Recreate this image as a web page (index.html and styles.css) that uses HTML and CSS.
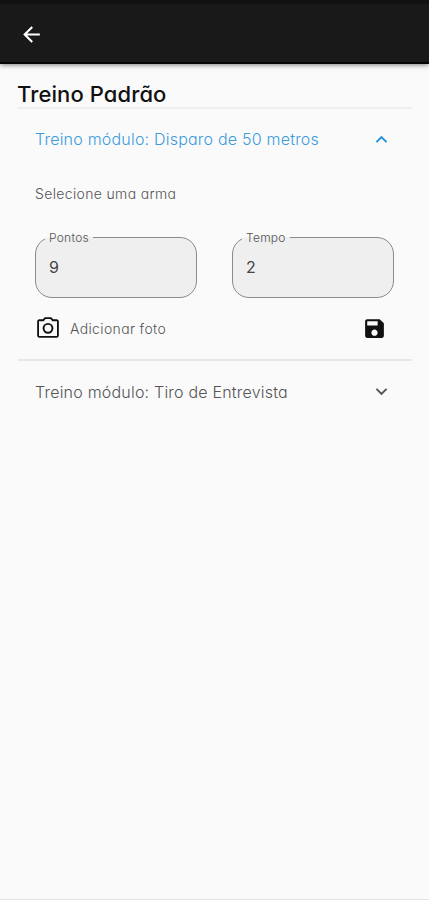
FILE: index.html
```html
<!DOCTYPE html>
<html lang="pt-BR">
<head>
<meta charset="utf-8">
<meta name="viewport" content="width=device-width, initial-scale=1">
<title>Treino Padrão</title>
<link rel="stylesheet" href="styles.css">
</head>
<body>
<header class="app-bar">
  <svg class="back" viewBox="0 0 24 24"><path d="M20 11H7.83l5.59-5.59L12 4l-8 8 8 8 1.41-1.41L7.83 13H20v-2z"/></svg>
</header>
<main class="content">
  <h1 class="title">Treino Padrão</h1>
  <section class="panel">
    <div class="panel-head active">
      <span>Treino módulo: Disparo de 50 metros</span>
      <svg class="chevron" viewBox="0 0 24 24"><path d="M12 8l-6 6 1.41 1.41L12 10.83l4.59 4.58L18 14z"/></svg>
    </div>
    <div class="panel-body">
      <p class="select">Selecione uma arma</p>
      <div class="fields">
        <fieldset class="field"><legend>Pontos</legend><div class="value">9</div></fieldset>
        <fieldset class="field"><legend>Tempo</legend><div class="value">2</div></fieldset>
      </div>
      <div class="actions">
        <svg class="icon camera" viewBox="0 0 24 24"><path d="M20 4h-3.17L15 2H9L7.17 4H4c-1.1 0-2 .9-2 2v13c0 1.1.9 2 2 2h16c1.1 0 2-.9 2-2V6c0-1.1-.9-2-2-2zm.3 15.3H3.7V5.7h4.25l1.83-2h4.44l1.83 2h4.25v13.6zM12 7.3a5 5 0 1 0 0 10 5 5 0 0 0 0-10zm0 8.2a3.2 3.2 0 1 1 0-6.4 3.2 3.2 0 0 1 0 6.4z"/></svg>
        <span class="photo">Adicionar foto</span>
        <svg class="icon save" viewBox="0 0 24 24"><path d="M17 3H5c-1.11 0-2 .9-2 2v14c0 1.1.89 2 2 2h14c1.1 0 2-.9 2-2V7l-4-4zm-5 16c-1.66 0-3-1.34-3-3s1.34-3 3-3 3 1.34 3 3-1.34 3-3 3zm3-10H5V5h10v4z"/></svg>
      </div>
    </div>
  </section>
  <section class="panel">
    <div class="panel-head">
      <span>Treino módulo: Tiro de Entrevista</span>
      <svg class="chevron" viewBox="0 0 24 24"><path d="M7.41 8.59L12 13.17l4.59-4.58L18 10l-6 6-6-6z"/></svg>
    </div>
  </section>
</main>
</body>
</html>
```
FILE: styles.css
```css
* { box-sizing: border-box; }
body {
  margin: 0;
  height: 900px;
  display: flex;
  flex-direction: column;
  background: #fafafa;
  border-bottom: 1px solid #e2e2e2;
  color: #555;
  font-family: Inter, "Liberation Sans", sans-serif;
  font-feature-settings: "cv11";
  font-weight: 300;
  white-space: nowrap;
}
.app-bar {
  height: 64px;
  padding: 4px 19px 0;
  display: flex;
  align-items: center;
  background: #191919;
  border-top: 4px solid #121212;
  border-bottom: 2px solid #050505;
  box-shadow: 0 1px 5px rgba(0, 0, 0, .5);
}
.back { width: 25px; height: 25px; margin-top: -1px; fill: #fff; }
.content { padding: 0 17px 0 18px; }
.title {
  margin: 0 0 0 -1px;
  height: 45px;
  padding-top: 17px;
  border-bottom: 2px solid #eee;
  color: #111;
  font-size: 22px;
  line-height: 27px;
  font-weight: 500;
  letter-spacing: .1px;
}
.panel { padding: 0 18px 0 17px; }
.panel + .panel { border-top: 2px solid #e8e8e8; }
.panel-head {
  height: 61px;
  padding-right: 1px;
  display: flex;
  align-items: center;
  justify-content: space-between;
  font-size: 16px;
  letter-spacing: .21px;
}
.panel-head.active { height: 60px; color: #3d9bdc; }
.chevron { width: 23px; height: 23px; fill: #555; }
.active .chevron { fill: #218fdc; }
.panel-body { height: 190px; }
.select { margin: 0; padding-top: 15px; font-size: 14px; line-height: 20px; letter-spacing: .35px; }
.fields { margin-top: 26px; display: flex; gap: 35px; }
.field {
  flex: 1;
  min-width: 0;
  height: 68px;
  margin: 0;
  padding: 0 13px;
  border: 1px solid #8b8b8b;
  border-radius: 17px;
  background: #efefef;
}
.field legend { margin-left: -4px; padding: 0 4px; font-size: 12px; line-height: 15px; letter-spacing: .25px; }
.value { margin-top: 12px; font-size: 16px; line-height: 20px; color: #444; font-weight: 400; }
.actions { display: flex; align-items: center; height: 24px; margin-top: 18px; font-size: 14px; letter-spacing: .35px; }
.icon { width: 26px; height: 26px; fill: #111; }
.photo { margin-left: 9px; }
.save { width: 25px; height: 25px; margin-left: auto; margin-right: 7px; }
```
